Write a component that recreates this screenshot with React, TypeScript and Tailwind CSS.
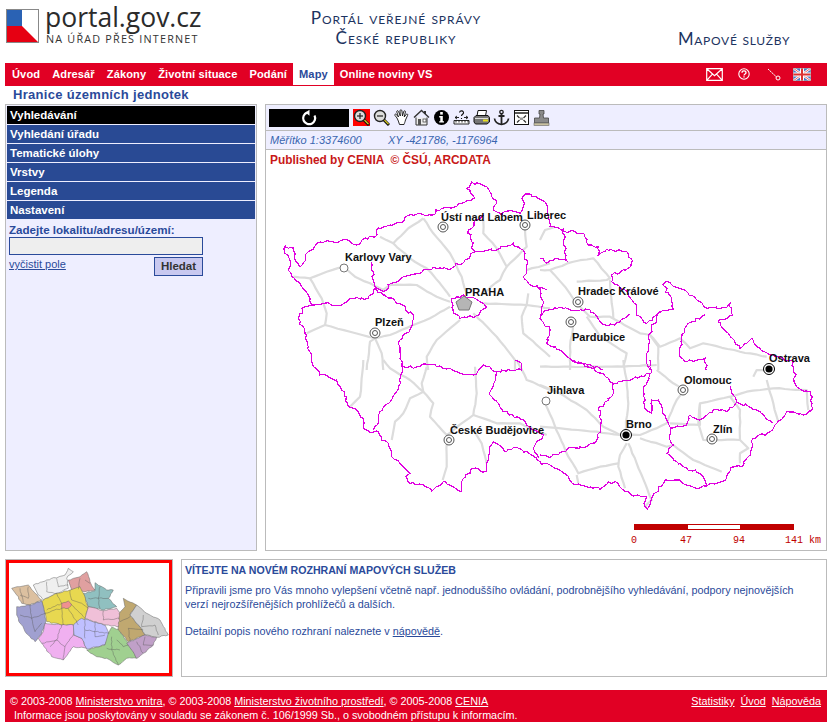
import React from "react";

type P = [number, number];
const Z = (ox: number, oy: number, a: number[]): P[] => {
  const r: P[] = [];
  for (let i = 0; i < a.length; i += 2) r.push([ox + a[i] / 3, oy + a[i + 1] / 3]);
  return r;
};
const Z5 = (a: number[]) => Z(270, 190, a);
const Z6 = (a: number[]) => Z(540, 190, a);
const Z7 = (a: number[]) => Z(270, 360, a);
const Z8 = (a: number[]) => Z(540, 360, a);
const Z11 = (a: number[]) => Z(440, 175, a);

let seed = 7;
const rnd = () => {
  seed = (seed * 16807) % 2147483647;
  return seed / 2147483647 - 0.5;
};
const jag = (pts: P[], step = 3, amp = 3) => {
  const out: string[] = [];
  pts.forEach((p, i) => {
    if (i > 0) {
      const q = pts[i - 1];
      const d = Math.hypot(p[0] - q[0], p[1] - q[1]);
      const n = Math.max(1, Math.round(d / step));
      for (let k = 1; k < n; k++) {
        const t = k / n;
        out.push(`${(q[0] + (p[0] - q[0]) * t + rnd() * amp).toFixed(1)},${(q[1] + (p[1] - q[1]) * t + rnd() * amp).toFixed(1)}`);
      }
    }
    out.push(`${p[0].toFixed(1)},${p[1].toFixed(1)}`);
  });
  return out.join(" ");
};

const outer: P[] = [
  [285, 247], [293, 248], [295, 260], [300, 267], [308, 252], [320, 242], [333, 242], [345, 239], [357, 245], [362, 240], [377, 235], [378, 228], [390, 225], [402, 223], [405, 217], [417, 214], [433, 215], [436, 210], [450, 208], [465, 202], [475, 198],
  ...Z11([80, 40, 95, 22, 140, 35, 155, 65, 170, 85, 160, 105, 185, 120, 205, 108, 240, 115, 250, 95, 248, 65, 265, 57, 305, 75, 320, 90, 330, 155, 365, 165]),
  ...Z6([135, 135, 145, 165, 175, 170, 175, 195, 200, 178, 260, 185, 277, 212, 265, 235, 215, 255, 215, 275, 265, 310, 290, 345, 290, 375, 320, 400, 355, 368, 400, 358, 395, 325, 368, 283, 378, 275, 445, 310, 480, 335, 500, 355, 560, 352, 570, 340, 578, 375, 535, 395, 565, 430, 600, 475, 635, 445, 650, 470, 690, 495, 760, 515, 760, 540]),
  ...Z8([770, 80, 810, 95, 818, 148, 790, 165, 740, 155, 705, 195, 690, 215, 640, 235, 625, 290, 605, 320, 572, 322, 560, 355, 500, 378, 470, 385, 440, 375, 405, 360, 375, 360, 340, 405, 322, 447, 312, 430, 320, 410, 280, 408, 255, 395, 235, 370, 205, 365, 180, 388, 135, 378, 105, 375, 80, 345, 45, 325, 0, 305]),
  ...Z7([800, 295, 785, 285, 740, 262, 710, 275, 670, 245, 660, 260, 650, 335, 610, 325, 580, 355, 575, 395, 550, 380, 520, 365, 485, 393, 460, 375, 420, 370, 408, 350, 420, 340, 395, 315, 365, 290, 355, 250, 335, 240, 325, 215, 300, 218, 280, 200, 280, 175, 255, 145, 235, 140, 215, 90, 200, 60, 150, 45, 125, 5]),
  ...Z5([115, 470, 105, 430, 85, 385, 105, 350, 125, 345, 118, 320, 65, 260, 55, 240, 60, 210, 45, 190, 45, 170]),
];

const inner: P[][] = [
  Z5([305, 215, 310, 270, 315, 290, 340, 305, 365, 280, 400, 260, 450, 250, 490, 232, 540, 240, 585, 210, 615, 185, 680, 180, 730, 160, 765, 190, 770, 240, 760, 260, 790, 290, 830, 300]),
  Z5([640, 75, 595, 120, 610, 180, 615, 185]),
  Z5([125, 345, 160, 340, 215, 345, 240, 325, 295, 325, 315, 295, 340, 315, 370, 325, 430, 375, 425, 410, 385, 460, 395, 530]),
  Z5([545, 325, 580, 315, 640, 340, 650, 350, 625, 375, 570, 385, 550, 370, 545, 325]),
  Z7([395, 15, 392, 70, 365, 120, 330, 155, 325, 190, 310, 210]),
  Z7([395, 15, 430, 25, 465, 12, 510, 18, 550, 32, 610, 45, 640, 15, 680, 35, 755, 30, 755, 10, 735, 0]),
  Z7([680, 35, 660, 105, 700, 155, 760, 180, 770, 195, 820, 225, 790, 265, 805, 295]),
  Z6([70, 115, 75, 180, 80, 212, 45, 205, 20, 220, 0, 205]),
  Z6([0, 290, 10, 340, 0, 385, 30, 420, 20, 460, 60, 480, 100, 515, 135, 520, 190, 540]),
  Z6([0, 375, 45, 352, 105, 362, 150, 360, 195, 405, 225, 405, 270, 372]),
  Z6([360, 365, 325, 440, 320, 520, 330, 540]),
  Z6([495, 375, 445, 400, 425, 445, 420, 500, 440, 515, 495, 505, 500, 540]),
  Z8([100, 0, 185, 40, 220, 70, 260, 62, 330, 40, 310, 90, 315, 145, 335, 160, 335, 120, 355, 120, 380, 180, 392, 210, 390, 240, 400, 255, 380, 280, 430, 320, 480, 340, 500, 375]),
  Z8([220, 70, 215, 110, 175, 150, 185, 180, 170, 240, 140, 260, 90, 262, 35, 290, 0, 285]),
  Z8([330, 0, 335, 40]),
  Z8([392, 205, 440, 195, 450, 165, 480, 180, 520, 150, 560, 155, 590, 125, 660, 155, 700, 190]),
  Z8([570, 80, 590, 125]),
];

const roads: P[][] = [
  Z5([540, 350, 480, 385, 430, 405, 360, 435, 315, 445, 240, 425, 165, 405, 110, 430]),
  Z5([315, 445, 300, 455, 290, 540]),
  Z5([315, 445, 335, 490, 340, 540]),
  Z5([165, 405, 170, 370, 155, 325, 120, 265, 70, 260]),
  Z5([120, 265, 170, 245, 220, 230, 255, 260, 300, 280, 340, 300, 360, 285, 440, 285, 500, 320, 540, 335]),
  Z5([460, 85, 490, 130, 540, 190, 575, 260, 590, 310]),
  Z5([460, 85, 415, 115, 370, 160, 330, 140]),
  Z5([370, 160, 420, 205, 470, 235, 510, 280, 540, 320]),
  Z5([640, 340, 770, 345, 840, 355]),
  Z5([610, 370, 680, 440, 735, 510, 735, 540]),
  Z5([570, 390, 500, 450, 470, 500, 475, 540]),
  Z5([640, 90, 640, 130, 680, 175, 710, 230, 690, 270, 640, 310]),
  Z5([765, 120, 770, 170, 710, 230]),
  Z5([770, 240, 840, 220]),
  Z5([775, 310, 770, 345, 755, 380, 760, 430, 840, 500]),
  Z6([0, 150, 15, 120, 45, 110]),
  Z6([0, 240, 30, 240, 75, 290, 110, 340, 150, 380, 210, 380, 300, 430, 330, 435, 360, 470, 420, 445, 450, 475, 490, 460, 600, 485, 680, 500]),
  Z6([30, 240, 100, 215, 160, 205, 210, 265, 200, 270, 110, 275]),
  Z6([210, 270, 215, 340, 220, 385]),
  Z6([140, 380, 180, 440, 260, 490, 250, 530]),
  Z6([90, 540, 90, 470, 100, 400]),
  Z6([330, 435, 355, 470, 355, 540]),
  Z6([0, 530, 250, 530, 350, 525]),
  Z7([280, 0, 270, 110, 240, 140]),
  Z7([340, 0, 360, 25, 420, 60, 460, 95, 420, 115, 400, 160, 375, 185, 365, 240]),
  Z7([470, 20, 455, 70, 460, 95, 490, 130, 480, 170, 530, 225, 530, 320, 518, 360]),
  Z7([615, 20, 620, 100, 610, 165, 530, 225]),
  Z7([610, 165, 680, 190, 750, 190, 830, 225]),
  Z7([610, 210, 635, 250, 650, 310]),
  Z7([740, 0, 770, 60, 840, 90]),
  Z8([0, 75, 60, 100, 140, 150, 190, 200, 240, 225, 300, 225, 380, 190, 410, 120, 430, 90]),
  Z8([0, 200, 170, 215, 240, 225]),
  Z8([250, 0, 260, 60, 265, 130, 255, 220]),
  Z8([260, 250, 240, 285, 235, 320, 255, 385]),
  Z8([265, 250, 290, 310, 335, 420, 315, 440]),
  Z8([235, 310, 180, 320, 115, 340, 85, 290, 15, 130]),
  Z8([110, 345, 115, 370]),
  Z8([300, 235, 380, 260, 400, 255, 460, 300, 545, 335]),
  Z8([390, 190, 480, 195, 480, 130, 570, 110, 620, 95, 700, 85, 800, 90, 805, 150]),
  Z8([480, 130, 475, 190, 490, 240, 600, 240, 600, 150, 570, 110]),
  Z8([680, 60, 700, 130, 715, 185]),
  Z8([640, 50, 650, 30, 680, 30]),
  Z8([600, 240, 625, 265, 600, 280, 600, 310]),
  Z8([350, 30, 400, 70, 430, 90]),
];

const cities: [string, number, number][] = [
  ["Ústí nad Labem", 441, 221],
  ["Liberec", 527, 219],
  ["Karlovy Vary", 345, 261],
  ["PRAHA", 465, 296],
  ["Plzeň", 375, 326],
  ["Hradec Králové", 578, 295],
  ["Pardubice", 572, 341],
  ["Ostrava", 769, 362],
  ["Olomouc", 684, 384],
  ["Jihlava", 547, 394],
  ["České Budějovice", 450, 434],
  ["Brno", 626, 428],
  ["Zlín", 713, 433],
];
const ringCities: P[] = [[443, 227], [525, 225], [375, 333], [578, 302], [571, 322], [683, 390], [449, 440], [712, 439]];
const blackCities: P[] = [[769, 369], [626, 435]];
const plainCities: P[] = [[344, 268], [546, 401]];

function CzMap() {
  seed = 7;
  return (
    <svg viewBox="266 150 560 400" className="absolute inset-0 w-[560px] h-[400px]">
      {roads.map((r, i) => (
        <polyline key={i} points={jag(r, 6, 0.8)} fill="none" stroke="#dcdcdc" strokeWidth="2.2" strokeLinejoin="round" />
      ))}
      {inner.map((r, i) => (
        <polyline key={i} points={jag(r)} fill="none" stroke="#e000e0" strokeWidth="1.2" shapeRendering="crispEdges" />
      ))}
      <polygon points={jag(outer)} fill="none" stroke="#e000e0" strokeWidth="1.2" shapeRendering="crispEdges" />
      {ringCities.map(([x, y], i) => (
        <g key={i} fill="#fff" stroke="#555" strokeWidth="1">
          <circle cx={x} cy={y} r="5" />
          <circle cx={x} cy={y} r="2.5" />
        </g>
      ))}
      {plainCities.map(([x, y], i) => (
        <circle key={i} cx={x} cy={y} r="4" fill="#fff" stroke="#777" strokeWidth="1" />
      ))}
      {blackCities.map(([x, y], i) => (
        <g key={i}>
          <circle cx={x} cy={y} r="5.500" fill="#fff" stroke="#000" strokeWidth="1" />
          <circle cx={x} cy={y} r="3.600" fill="#000" />
        </g>
      ))}
      <polygon points="464,296 472,302 469,310 459,310 456,302" fill="#b5b5b5" stroke="#777" strokeWidth="1" />
      {cities.map(([t, x, y]) => (
        <text key={t} x={x} y={y} fontFamily="'Liberation Sans', sans-serif" fontWeight="700" fontSize="11" fill="#111">
          {t}
        </text>
      ))}
      <rect x="634" y="524" width="160" height="6" fill="#c00000" />
      <rect x="688" y="525" width="52" height="4" fill="#fff" />
      {([["0", 631], ["47", 680], ["94", 733], ["141 km", 785]] as [string, number][]).map(([t, x]) => (
        <text key={t} x={x} y={543} fontFamily="'Liberation Mono', monospace" fontSize="10" fill="#c00000">
          {t}
        </text>
      ))}
    </svg>
  );
}

const regions: [string, number[]][] = [
  ["#dcc0a0", [35, 115, 60, 110, 85, 105, 115, 140, 125, 150, 90, 165, 65, 160, 50, 135]],
  ["#efefef", [100, 105, 140, 90, 195, 75, 205, 55, 220, 65, 200, 85, 205, 115, 170, 130, 130, 150, 115, 135]],
  ["#e0a0a0", [205, 90, 240, 80, 260, 65, 270, 95, 285, 120, 255, 125, 215, 120]],
  ["#90c0c0", [285, 98, 320, 120, 340, 120, 325, 145, 350, 170, 310, 180, 265, 170, 250, 130, 285, 122]],
  ["#e8d850", [130, 150, 170, 130, 210, 120, 240, 110, 250, 130, 265, 175, 255, 205, 235, 225, 190, 225, 140, 215, 135, 190, 125, 155]],
  ["#a0a0d0", [50, 170, 90, 165, 125, 152, 135, 190, 137, 215, 125, 250, 105, 275, 85, 255, 60, 220, 50, 195]],
  ["#f0b0f0", [135, 220, 185, 225, 220, 225, 220, 255, 245, 265, 260, 295, 220, 290, 190, 330, 155, 320, 125, 280, 115, 265, 130, 245]],
  ["#c0c0ff", [220, 225, 245, 205, 280, 215, 315, 225, 328, 255, 315, 285, 260, 297, 245, 265, 222, 255]],
  ["#f0c0d8", [265, 170, 310, 182, 350, 175, 362, 190, 358, 230, 320, 225, 280, 215, 255, 205]],
  ["#a0d090", [325, 250, 335, 232, 355, 238, 385, 280, 395, 300, 410, 325, 380, 325, 355, 345, 320, 325, 290, 320, 260, 300, 315, 285]],
  ["#c0a870", [370, 145, 410, 165, 390, 195, 420, 230, 435, 255, 385, 275, 355, 240, 358, 190, 375, 170]],
  ["#d0d0d0", [410, 165, 440, 190, 480, 210, 505, 255, 470, 262, 435, 255, 420, 230, 390, 195]],
  ["#c0a0c8", [380, 280, 435, 255, 470, 262, 460, 285, 430, 310, 410, 325, 395, 300]],
  ["#f09090", [185, 160, 205, 153, 215, 165, 205, 175, 185, 175]],
];
const districts: number[][] = [
  [60, 115, 70, 160], [85, 110, 85, 145, 60, 135],
  [140, 95, 140, 125, 170, 130], [170, 85, 175, 110, 205, 105],
  [240, 85, 235, 118], [255, 90, 270, 100],
  [300, 110, 295, 145, 325, 145], [265, 145, 295, 145, 300, 175],
  [210, 120, 215, 150, 245, 160, 265, 175], [170, 130, 185, 160, 140, 180], [185, 175, 190, 225], [205, 175, 235, 225], [215, 165, 255, 205], [135, 190, 185, 175],
  [90, 165, 95, 205, 135, 190], [60, 195, 95, 205, 105, 245, 125, 220],
  [185, 225, 170, 270, 125, 280], [170, 270, 195, 290, 190, 330], [220, 255, 195, 290], [150, 290, 170, 270],
  [255, 210, 255, 265], [285, 215, 285, 260, 315, 255], [255, 240, 328, 250],
  [310, 182, 310, 210, 358, 205],
  [335, 260, 335, 300, 355, 345], [350, 270, 370, 290, 385, 285], [320, 295, 360, 300],
  [360, 215, 390, 200], [385, 235, 430, 240], [385, 235, 390, 275],
  [430, 195, 425, 230, 465, 225, 475, 255],
  [410, 275, 430, 310], [435, 260, 430, 285, 460, 285],
];

function MiniMap() {
  seed = 11;
  const s = (a: number[]) => jag(Z(0, 550, a), 2.5, 1.2);
  return (
    <svg viewBox="9 563 160 110" className="w-[160px] h-[110px]">
      {regions.map(([c, a], i) => (
        <polygon key={i} points={s(a)} fill={c} stroke="#666" strokeWidth="0.5" />
      ))}
      {districts.map((a, i) => (
        <polyline key={i} points={s(a)} fill="none" stroke="#555" strokeWidth="0.4" />
      ))}
    </svg>
  );
}

function Lens({ plus }: { plus: boolean }) {
  return (
    <svg viewBox="0 0 17 17" className="w-[17px] h-[17px] shrink-0">
      <circle cx="7" cy="7" r="5.500" fill="#ddd" stroke="#222" strokeWidth="1.400" />
      <path d="M4 7h6" stroke="#222" strokeWidth="1.200" />
      {plus && <path d="M7 4v6" stroke="#222" strokeWidth="1.200" />}
      <path d="M11 11l5 5" stroke="#111" strokeWidth="3" />
      <path d="M11.500 11.200l4 4" stroke="#e8d820" strokeWidth="1.200" />
    </svg>
  );
}

function Toolbar() {
  const cls = "w-[17px] h-[17px] shrink-0";
  return (
    <div className="flex h-[26px] items-center pl-[3px] bg-[#eeeeff] border-b border-[#bbbbbb]">
      <div className="flex w-[80px] h-[18px] bg-black items-center justify-center">
        <svg viewBox="0 0 18 18" className="w-[18px] h-[18px]">
          <path d="M7 3.600A6 6 0 1 0 14.500 6.500" fill="none" stroke="#fff" strokeWidth="2.200" />
          <path d="M9.500 0.800v6L5.400 3.600z" fill="#fff" />
        </svg>
      </div>
      <div className="flex gap-[3px] ml-[4px]">
        <div className="bg-[#ff0000] w-[17px] h-[17px]">
          <Lens plus />
        </div>
        <Lens plus={false} />
        <svg viewBox="0 0 17 17" className={cls}>
          <path d="M4 9L2 6.500c-.8-1 .6-2 1.400-1L5.500 8 3.800 3c-.4-1.300 1.200-1.800 1.700-.6L7.300 7 7 1.800c0-1.400 1.800-1.400 1.900 0L9.500 7l1.200-4.500c.4-1.200 2-.8 1.700.5L11.200 8l2-2.600c.8-1 2.100 0 1.400 1L12.500 11c-.5 2-1 3-1.500 4.500H6.500C5.800 13 5 11 4 9z" fill="#fff" stroke="#111" strokeWidth="0.900" />
        </svg>
        <svg viewBox="0 0 17 17" className={cls}>
          <path d="M1 8.500L8.500 1.500 16 8.500" fill="none" stroke="#333" strokeWidth="1.400" />
          <path d="M12 2v3" stroke="#333" strokeWidth="2" />
          <path d="M3 8.500V16h11V8.500" fill="#eee" stroke="#333" />
          <rect x="5" y="10" width="3" height="6" fill="#555" />
          <rect x="10" y="10" width="3" height="3" fill="#fff" stroke="#333" strokeWidth="0.700" />
        </svg>
        <svg viewBox="0 0 17 17" className={cls}>
          <circle cx="8.500" cy="8.500" r="7.500" fill="#000" />
          <rect x="7.200" y="3" width="2.600" height="2.600" fill="#fff" />
          <path d="M6.200 7h3.600v5.200h1.200v1.400H6.200v-1.400h1.100V8.400H6.200z" fill="#fff" />
        </svg>
        <svg viewBox="0 0 17 17" className={cls}>
          <path d="M1 11.500h15v3.500H1zM3 11.500v2M6 11.500v2M9 11.500v2M12 11.500v2M15 11.500v2" fill="#fff" stroke="#111" strokeWidth="0.900" />
          <path d="M2 8.500h4M11 8.500h4M2 8.500l2-1.500M2 8.500l2 1.500M15 8.500l-2-1.500M15 8.500l-2 1.500" stroke="#111" strokeWidth="0.900" />
          <path d="M6.500 3.500c.5-2.500 4.500-2 4 .5-.3 1.200-2 1.500-2 3M8.500 9v1" fill="none" stroke="#111" strokeWidth="1.100" />
        </svg>
        <svg viewBox="0 0 17 17" className={cls}>
          <path d="M5 1.500h8.500L12.500 7H4z" fill="#fff" stroke="#111" />
          <path d="M1 8.500L3 6.500h12l1.500 2v4.500L14 15H2.500L1 13z" fill="#777" stroke="#111" />
          <path d="M2 9.500h13" stroke="#ddd" />
          <rect x="10" y="10.500" width="5" height="2" fill="#e8e020" />
        </svg>
        <svg viewBox="0 0 17 17" className={cls}>
          <circle cx="8.500" cy="3" r="1.700" fill="none" stroke="#222" strokeWidth="1.300" />
          <path d="M8.500 4.500V15.500M5.500 7h6" stroke="#222" strokeWidth="1.800" />
          <path d="M1.500 9.500c.5 4 4 5.500 7 6 3-.5 6.500-2 7-6" fill="none" stroke="#222" strokeWidth="1.700" />
        </svg>
        <svg viewBox="0 0 17 17" className={cls}>
          <rect x="1.500" y="1.500" width="14" height="14" fill="#fff" stroke="#111" />
          <path d="M1.500 4h14" stroke="#111" strokeWidth="1.400" />
          <path d="M4 6.500l2.500 2.500M13 6.500l-2.500 2.500M4 13.500l2.500-2.500M13 13.500L10.500 11" stroke="#333" strokeWidth="1.200" />
          <rect x="7" y="8.500" width="3" height="2.500" fill="#999" />
        </svg>
        <svg viewBox="0 0 17 17" className={cls}>
          <path d="M6 1.500h5v3.500H10l.5 4h5v5H1.500V9h5L7 5H6z" fill="#8a8a8a" stroke="#444" strokeWidth="0.800" />
          <rect x="1" y="14" width="15" height="2.500" fill="#c8c0a0" stroke="#666" strokeWidth="0.600" />
        </svg>
      </div>
    </div>
  );
}

const navItems = ["Úvod", "Adresář", "Zákony", "Životní situace", "Podání", "Mapy", "Online noviny VS"];
const panels = ["Vyhledávání", "Vyhledání úřadu", "Tematické úlohy", "Vrstvy", "Legenda", "Nastavení"];

export default function App() {
  return (
    <div className="w-[832px] h-[727px] bg-white px-[5px] font-['Liberation_Sans',sans-serif] text-[#2a4a9a] overflow-hidden">
      <header className="flex h-[63px]">
        <div className="flex w-[302px] pt-[9px] pl-px">
          <svg viewBox="0 0 33 34" className="w-[33px] h-[34px] shrink-0">
            <rect x="0.500" y="0.500" width="32" height="33" fill="#fff" stroke="#888" />
            <rect x="1" y="1" width="15" height="16" fill="#2a62b4" />
            <path d="M1 17h15l16 16H1z" fill="#e60012" />
          </svg>
          <div className="ml-[6px] mt-[-8px] text-[#2b2b2b]">
            <div className="font-['Open_Sans',sans-serif] text-[26.500px] leading-[32px] whitespace-nowrap">portal.gov.cz</div>
            <div className="font-['Open_Sans',sans-serif] text-[10.800px] tracking-[1.200px] leading-[11px] ml-px whitespace-nowrap text-[#333]">NA ÚŘAD PŘES INTERNET</div>
          </div>
        </div>
        <div className="w-[178px] pt-[8px] text-center font-['Lato',sans-serif] text-[#1c3360] text-[17.200px] tracking-[0.900px] leading-[20px] [font-variant:small-caps] whitespace-nowrap">
          <div>Portál veřejné správy</div>
          <div>České republiky</div>
        </div>
        <div className="ml-[193px] pt-[28px] font-['Lato',sans-serif] text-[#1c3360] text-[16.800px] tracking-[0.700px] leading-[21px] [font-variant:small-caps] whitespace-nowrap">
          Mapové služby
        </div>
      </header>

      <nav className="flex h-[23px] bg-[#e10024] pl-px pb-px items-stretch text-[11.100px] tracking-[0.100px] font-bold text-white">
        {navItems.map((n) =>
          n === "Mapy" ? (
            <div key={n} className="flex items-center px-[6px] bg-white text-[#2a4a9a]">{n}</div>
          ) : (
            <div key={n} className="flex items-center px-[6px] whitespace-nowrap">{n}</div>
          ),
        )}
        <div className="ml-auto flex items-center pr-[16px]">
          <svg viewBox="0 0 17 13" className="w-[17px] h-[13px]">
            <path d="M.7.700h15.600v11.600H.7zM.7.700l7.800 7 7.800-7M.7 12.300l5.500-6M16.300 12.300l-5.500-6" fill="none" stroke="#fff" strokeWidth="1.200" />
          </svg>
          <svg viewBox="0 0 12 12" className="w-[12px] h-[12px] ml-[15px]">
            <circle cx="6" cy="6" r="5.200" fill="none" stroke="#fff" strokeWidth="1.100" />
            <path d="M4 4.700c0-2.400 4-2.400 4 0 0 1.300-2 1.300-2 2.800M6 8.300v1.300" fill="none" stroke="#fff" strokeWidth="1.300" />
          </svg>
          <svg viewBox="0 0 14 13" className="w-[14px] h-[13px] ml-[17px]">
            <path d="M1 1l8.500 8" stroke="#fff" strokeDasharray="2 0.500" />
            <circle cx="11" cy="10" r="2" fill="none" stroke="#fff" />
          </svg>
          <svg viewBox="0 0 18 13" className="w-[18px] h-[13px] ml-[12px]">
            <rect width="18" height="13" fill="#4a78c8" />
            <path d="M0 0l18 13M18 0L0 13" stroke="#fff" strokeWidth="2.400" />
            <path d="M0 0l18 13M18 0L0 13" stroke="#d44" strokeWidth="0.800" />
            <path d="M9 0v13M0 6.500h18" stroke="#fff" strokeWidth="4" />
            <path d="M9 0v13M0 6.500h18" stroke="#d33" strokeWidth="2" />
            <rect x="0.300" y="0.300" width="17.400" height="12.400" fill="none" stroke="#aaa" strokeWidth="0.600" />
          </svg>
        </div>
      </nav>

      <h1 className="h-[18px] pl-[8px] text-[13px] leading-[17px] font-bold text-[#2a4a9a] tracking-[0.300px]">Hranice územních jednotek</h1>

      <main className="flex gap-[8px] h-[447px]">
        <aside className="w-[252px] border border-[#bbbbbb] bg-[#eeeeff] p-px">
          <div className="flex flex-col gap-px">
            {panels.map((p, i) => (
              <div key={p} className={`h-[18px] pl-[3px] text-[11.500px] leading-[18px] font-bold text-white ${i === 0 ? "bg-black" : "bg-[#294a94]"}`}>{p}</div>
            ))}
          </div>
          <div className="px-[2px]">
            <div className="text-[11.600px] leading-[15px] mt-[3px] font-bold">Zadejte lokalitu/adresu/území:</div>
            <div className="w-[194px] h-[18px] bg-[#eeeeee] border border-[#2a4a9a]" />
            <div className="flex w-[194px] justify-between items-start mt-[2px]">
              <a className="text-[11px] leading-[13px] mt-px underline text-[#2a4a9a]">vyčistit pole</a>
              <div className="w-[49px] h-[19px] bg-[#c8c8f0] border border-[#2a4a9a] text-center text-[11.500px] leading-[17px] font-bold text-[#333]">Hledat</div>
            </div>
          </div>
        </aside>

        <section className="w-[562px] border border-[#bbbbbb] flex flex-col">
          <Toolbar />
          <div className="flex h-[19px] bg-[#eeeeff] border-b border-[#bbbbbb] pl-[4px] text-[11px] leading-[18px] italic text-[#3a66b0] whitespace-pre">
            <span className="w-[118px]">Měřítko 1:3374600</span>
            <span>XY -421786, -1176964</span>
          </div>
          <div className="relative flex-1 bg-white">
            <CzMap />
            <div className="relative pl-[4px] text-[11.900px] leading-[20px] font-bold text-[#c81818] whitespace-pre">Published by CENIA  © ČSÚ, ARCDATA</div>
          </div>
        </section>
      </main>

      <div className="flex gap-[8px] h-[118px] mt-[8px]">
        <div className="w-[168px] border border-[#bbbbbb]">
          <div className="border-[3px] border-[#ff0000] h-full">
            <MiniMap />
          </div>
        </div>
        <div className="w-[646px] border border-[#bbbbbb] px-[3px] pt-[3px] text-[10.800px] text-[#2a4a9a] leading-[14px] whitespace-nowrap">
          <div className="font-bold text-[10.600px] leading-[14px]">VÍTEJTE NA NOVÉM ROZHRANÍ MAPOVÝCH SLUŽEB</div>
          <p className="mt-[6px]">Připravili jsme pro Vás mnoho vylepšení včetně např. jednoduššího ovládání, podrobnějšího vyhledávání, podpory nejnovějších<br />verzí nejrozšířenějších prohlížečů a dalších.</p>
          <p className="mt-[13px]">Detailní popis nového rozhraní naleznete v <a className="underline">nápovědě</a>.</p>
        </div>
      </div>

      <footer className="flex justify-between h-[32px] mt-[13px] bg-[#e10024] text-white text-[10.800px] leading-[14px] pt-[4px] pl-[5px] pr-[6px] whitespace-nowrap">
        <div>
          <div>© 2003-2008 <a className="underline">Ministerstvo vnitra</a>, © 2003-2008 <a className="underline">Ministerstvo životního prostředí</a>, © 2005-2008 <a className="underline">CENIA</a></div>
          <div className="pl-[4px]">Informace jsou poskytovány v souladu se zákonem č. 106/1999 Sb., o svobodném přístupu k informacím.</div>
        </div>
        <div className="flex gap-[6px]">
          <a className="underline">Statistiky</a>
          <a className="underline">Úvod</a>
          <a className="underline">Nápověda</a>
        </div>
      </footer>
    </div>
  );
}
